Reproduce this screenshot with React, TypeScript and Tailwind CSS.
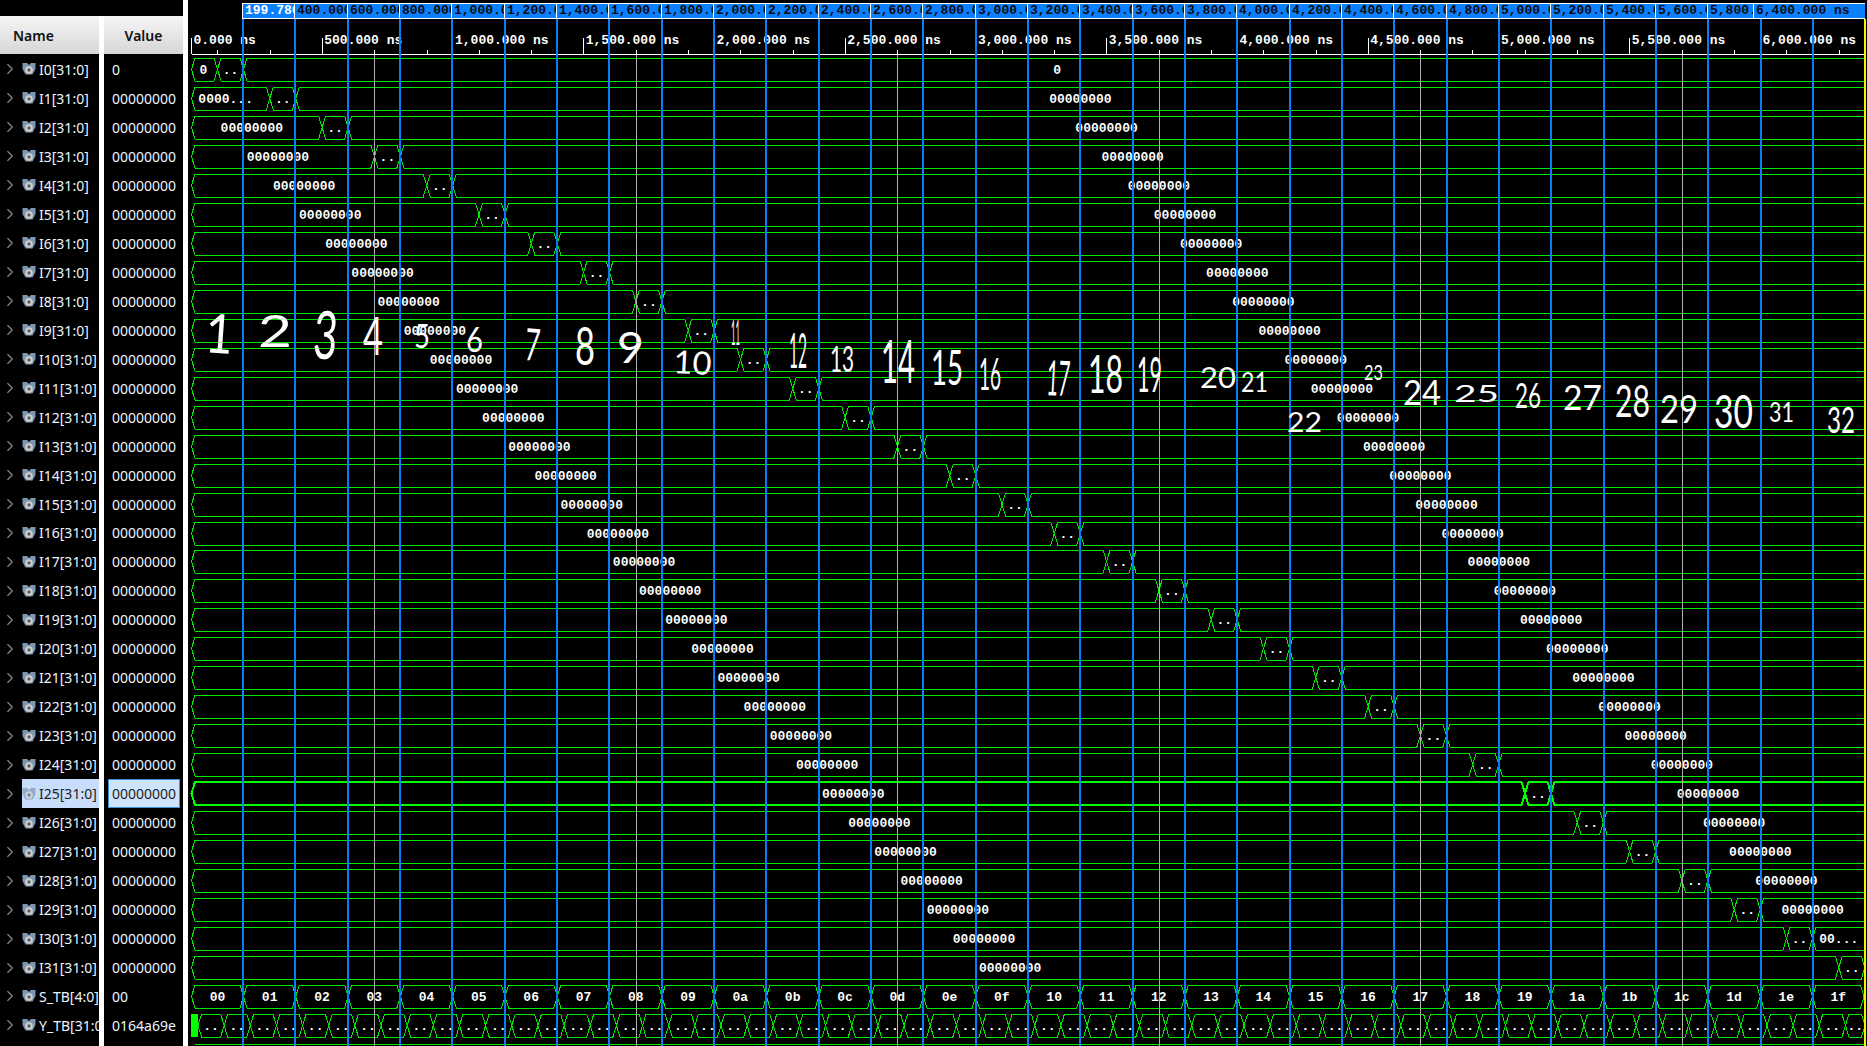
import { ChevronRight } from 'lucide-react';

const ROW_PITCH = 28.97;
const GREEN = '#00e800';
const rowTop = (k: number) => Math.round(58 + ROW_PITCH * k);
const cursorX = (i: number) => Math.round(243 + 52.33 * i);
const END_X = 1865;

type Signal = { name: string; value: string };

const signals: Signal[] = [
  ...Array.from({ length: 32 }, (_, i) => ({ name: `I${i}[31:0]`, value: i === 0 ? '0' : '00000000' })),
  { name: 'S_TB[4:0]', value: '00' },
  { name: 'Y_TB[31:0]', value: '0164a69e' },
];

const tabs = [
  '199.780 ns',
  ...Array.from({ length: 28 }, (_, i) => {
    const v = (i + 2) * 200;
    return v < 1000 ? `${v}.000 ns` : `${Math.floor(v / 1000)},${String(v % 1000).padStart(3, '0')}.000 ns`;
  }),
];

// hand written marks over the capture: label, left, right, top, bottom, tilt
const marks: [string, number, number, number, number, number][] = [
  ['1', 204, 232, 313, 352, 4], ['2', 258, 292, 315, 347, 0], ['3', 312, 336, 310, 358, 4],
  ['4', 363, 383, 318, 355, 0], ['5', 414, 430, 325, 348, 0], ['6', 466, 483, 327, 352, 0],
  ['7', 524, 539, 328, 360, 4], ['8', 575, 595, 328, 365, 0], ['9', 617, 644, 333, 363, 0],
  ['10', 673, 711, 350, 373, 3], ['11', 731, 740, 320, 345, 0], ['12', 789, 807, 333, 368, 0],
  ['13', 830, 854, 345, 372, 0], ['14', 881, 915, 340, 383, 0], ['15', 931, 963, 350, 385, 0],
  ['16', 979, 1001, 358, 390, 0], ['17', 1046, 1069, 360, 395, 3], ['18', 1088, 1123, 355, 393, 0],
  ['19', 1137, 1162, 357, 392, 0], ['20', 1200, 1236, 367, 388, 0], ['21', 1241, 1268, 373, 392, 0],
  ['22', 1287, 1322, 413, 432, 0], ['23', 1364, 1383, 365, 380, 0], ['24', 1403, 1441, 380, 405, 0],
  ['25', 1454, 1499, 385, 402, 0], ['26', 1515, 1541, 383, 408, 0], ['27', 1563, 1602, 385, 410, 0],
  ['28', 1615, 1650, 385, 417, 0], ['29', 1660, 1698, 395, 423, 0], ['30', 1714, 1753, 395, 428, 0],
  ['31', 1769, 1794, 403, 422, 0], ['32', 1827, 1855, 407, 433, 0],
];

function BusIcon({ faded }: { faded?: boolean }) {
  return (
    <svg width="14" height="14" viewBox="0 0 14 14" className={faded ? 'shrink-0 opacity-70' : 'shrink-0'}>
      <path d="M0.5 1h4.5l2 2 2-2h4.5v6l-3 5.5H3.5L0.5 7z" fill="#7d97b0" />
      <circle cx="7" cy="8" r="3.8" fill="#cfcfcf" />
      <circle cx="7" cy="8" r="1.7" fill="#5c5c5c" />
    </svg>
  );
}

// one bus segment as the hexagon outline the viewer draws; open runs off the right edge
function hexagon(a: number, b: number, top: number, open?: boolean) {
  const bottom = top + 23;
  const mid = top + 11.5;
  const s = 3.5;
  if (open) return `M${b} ${top}H${a + s}L${a} ${mid}L${a + s} ${bottom}H${b}`;
  return `M${a} ${mid}L${a + s} ${top}H${b - s}L${b} ${mid}L${b - s} ${bottom}H${a + s}Z`;
}

function Seg({ a, b, top, label, shift = 0, open, thick }: { a: number; b: number; top: number; label?: string; shift?: number; open?: boolean; thick?: boolean }) {
  return (
    <>
      <path d={hexagon(a, b, top, open)} fill="none" stroke={thick ? '#00ff00' : GREEN} strokeWidth={thick ? 2 : 1} shapeRendering="crispEdges" />
      {label && (
        <text x={(a + b) / 2 + shift} y={top + 16} textAnchor="middle" fill="#fff" fontSize="13" fontWeight="700">
          {label}
        </text>
      )}
    </>
  );
}

function BusRow({ k }: { k: number }) {
  const top = rowTop(k);
  const x1 = 217.5 + 52.3 * k;
  const x2 = 243.5 + 52.3 * k;
  const full = k === 0 ? '0' : '00000000';
  const first = k === 0 ? '0' : k === 1 ? '0000...' : '00000000';
  const thick = k === 25;
  return (
    <g>
      <Seg a={191.5} b={x1} top={top} label={first} shift={k === 0 ? -1 : -5} thick={thick} />
      <Seg a={x1} b={x2} top={top} label=".." thick={thick} />
      {k < 31 && <Seg a={x2} b={END_X} top={top} label={k === 30 ? '00...' : full} shift={k === 0 ? 3 : 0} open thick={thick} />}
    </g>
  );
}

function Ruler() {
  return (
    <g>
      <path d={`M191.5 54.5H${END_X}`} stroke="#fff" shapeRendering="crispEdges" />
      {Array.from({ length: 32 }, (_, i) => {
        const x = Math.round(217.3 + 52.3 * i) + 0.5;
        const long = i % 5 === 2;
        return <path key={i} d={`M${x} ${long ? 38 : 50}V54`} stroke="#fff" shapeRendering="crispEdges" />;
      })}
      <path d="M191.5 38V54" stroke="#fff" shapeRendering="crispEdges" />
      {Array.from({ length: 13 }, (_, i) => {
        const v = i * 500;
        const t = v < 1000 ? `${v}.000 ns` : `${Math.floor(v / 1000)},${String(v % 1000).padStart(3, '0')}.000 ns`;
        return (
          <text key={i} x={193.5 + 130.75 * i} y={44} fill="#fff" fontSize="13" fontWeight="700">
            {t}
          </text>
        );
      })}
    </g>
  );
}

function Waves() {
  const sTop = rowTop(32);
  const yTop = rowTop(33);
  return (
    <svg viewBox="188 19 1679 1027" width="1679" height="1027" className="block font-['Liberation_Mono',monospace]">
      <Ruler />
      {Array.from({ length: 32 }, (_, k) => <BusRow key={k} k={k} />)}

      {Array.from({ length: 32 }, (_, i) => {
        const a = i === 0 ? 191.5 : 243.5 + 52.3 * (i - 1);
        const b = i === 31 ? END_X - 1 : 243.5 + 52.3 * i;
        return <Seg key={i} a={a} b={b} top={sTop} label={i.toString(16).padStart(2, '0')} />;
      })}

      <rect x="191" y={yTop} width="7" height="23" fill="#00ff00" />
      {Array.from({ length: 64 }, (_, i) => {
        const a = 198 + 26.15 * i;
        return <Seg key={i} a={a} b={Math.min(a + 26.15, END_X)} top={yTop} label=".." />;
      })}
      <path d={`M195 1044.5H${END_X}`} stroke={GREEN} shapeRendering="crispEdges" />

      {[0, 1, 2, 3, 4, 5].map((i) => (
        <path key={i} d={`M${Math.round(374 + 261.6 * i) + 0.5} 55V1046`} stroke="#b0b0b0" shapeRendering="crispEdges" />
      ))}
      {Array.from({ length: 31 }, (_, i) => (
        <rect key={i} x={cursorX(i) - 1} y={19} width="2" height="1027" fill="#0a7cf8" />
      ))}
      <rect x="1864" y="0" width="2" height="1046" fill="#f5f500" />

      <g className="font-['Lato',sans-serif]" fill="#fff">
        {marks.map(([label, l, r, t, b, tilt]) => {
          const size = (b - t) / 0.72;
          const sx = (r - l) / (label.length * 0.58 * size);
          return (
            <text key={label} fontSize={size} transform={`translate(${l} ${b}) rotate(${tilt}) scale(${sx} 1)`}>
              {label}
            </text>
          );
        })}
      </g>
    </svg>
  );
}

export default function App() {
  return (
    <div className="flex h-screen overflow-hidden bg-black font-['Noto_Sans',sans-serif] text-[14px] text-[#eef4ff]">
      {/* Name column */}
      <div className="w-[99px] shrink-0 pt-[16px]">
        <div className="flex h-[38px] items-center bg-gradient-to-b from-[#f6f6f6] to-[#d6d6d6] pl-[13px] font-semibold text-[#111]">Name</div>
        <div className="pt-[1px]">
          {signals.map((s, i) => (
            <div key={s.name} className="flex h-[28.97px] items-center">
              <ChevronRight size={18} strokeWidth={1.5} className="ml-[1px] mr-[3px] shrink-0 text-[#8a8a8a]" />
              <div className={i === 25 ? 'flex h-full flex-1 items-center gap-[3px] overflow-hidden whitespace-nowrap bg-[#c8dcfb] text-[#222]' : 'flex flex-1 items-center gap-[3px] overflow-hidden whitespace-nowrap'}>
                <BusIcon faded={i === 25} />
                <span>{s.name}</span>
              </div>
            </div>
          ))}
        </div>
      </div>

      <div className="mt-[16px] w-[5px] shrink-0 bg-white" />

      {/* Value column */}
      <div className="w-[79px] shrink-0 pt-[16px]">
        <div className="flex h-[38px] items-center justify-center bg-gradient-to-b from-[#f6f6f6] to-[#d6d6d6] font-semibold text-[#111]">Value</div>
        <div className="pt-[1px]">
          {signals.map((s, i) => (
            <div key={s.name} className="flex h-[28.97px] items-center pl-[4px] pr-[3px]">
              <span className={i === 25 ? 'flex h-full w-full items-center border border-[#3c8fdc] bg-[#cfe4fb] pl-[3px] text-[#222]' : 'pl-[4px]'}>{s.value}</span>
            </div>
          ))}
        </div>
      </div>

      <div className="w-[5px] shrink-0 bg-white" />

      {/* Waveform pane */}
      <div className="min-w-0 flex-1">
        <div className="ml-[54px] mt-[3px] flex h-[16px] w-[1623px] border-y border-white bg-[#0a80ff] font-['Liberation_Mono',monospace] text-[13px] font-bold leading-[14px]">
          {tabs.map((t, i) => (
            <div
              key={t}
              className={i === 0 ? 'overflow-hidden whitespace-nowrap border-l border-white pl-[2px] text-white' : 'overflow-hidden whitespace-nowrap border-l border-white pl-[2px] text-[#0a0a0a]'}
              style={{ width: (i === 28 ? 1754 : cursorX(i + 1)) - cursorX(i) }}
            >
              {t}
            </div>
          ))}
          <div className="flex-1 whitespace-nowrap border-l border-white pl-[2px] text-[#0a0a0a]">6,400.000 ns</div>
        </div>
        <Waves />
      </div>
    </div>
  );
}
